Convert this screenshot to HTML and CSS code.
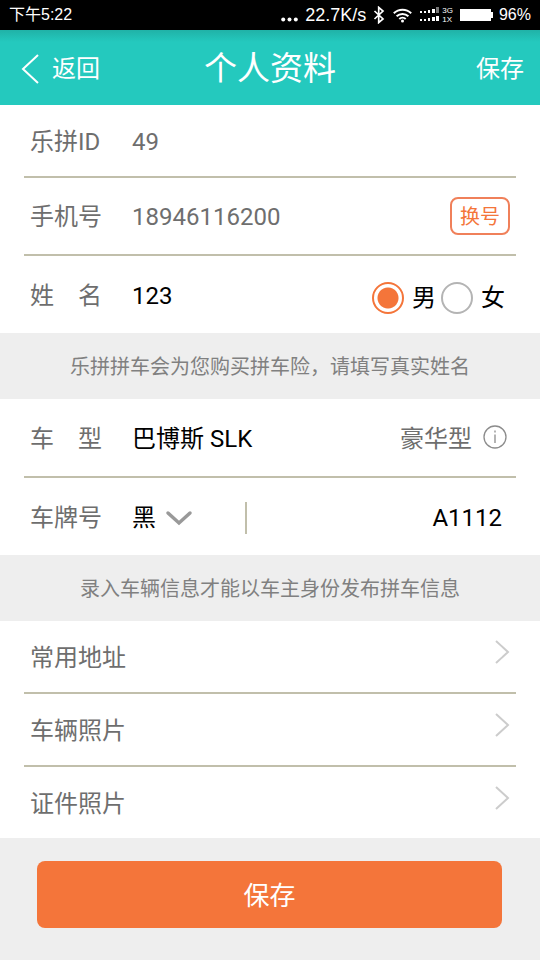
FILE: index.html
```html
<!DOCTYPE html>
<html lang="zh-CN">
<head>
<meta charset="utf-8">
<meta name="viewport" content="width=device-width, initial-scale=1">
<title>个人资料</title>
<link rel="stylesheet" href="styles.css">
</head>
<body>
<div class="status">
  <span class="status-time">下午5:22</span>
  <svg class="status-more" width="17" height="16" viewBox="0 0 17 16" aria-hidden="true"><circle cx="2.2" cy="12.500" r="2"/><circle cx="8.500" cy="12.500" r="2"/><circle cx="14.800" cy="12.500" r="2"/></svg>
  <span class="status-speed">22.7K/s</span>
  <svg class="status-bt" width="12" height="18" viewBox="0 0 12 18" fill="none" stroke="#fff" stroke-width="1.700" aria-hidden="true"><path d="M1.500 5l8.500 8-4.300 3.600V1.400L10 5l-8.500 8"/></svg>
  <svg class="status-wifi" width="19" height="15" viewBox="0 0 19 15" fill="none" stroke="#fff" stroke-width="2" aria-hidden="true"><path d="M.8 5.300a12.500 12.500 0 0 1 17.400 0M3.600 8.300a8.500 8.500 0 0 1 11.800 0M6.300 11a4.700 4.700 0 0 1 6.400 0"/><circle cx="9.500" cy="13" r="1.500" fill="#fff" stroke="none"/></svg>
  <svg class="status-signal" width="20" height="16" viewBox="0 0 20 16" fill="#fff" aria-hidden="true"><path d="M0 4h2v2H0zM4 4h2v2H4zM8 3h2v3H8zM12 2h3v4h-3zM0 12h2v2H0zM4 12h2v2H4zM8 11h2v3H8zM12 10h3v4h-3zM16 9h3v5h-3z"/><path fill="#777" d="M16 0h3v6h-3z"/></svg>
  <span class="status-net"><span>3G</span><span>1X</span></span>
  <svg class="status-battery" width="34" height="14" viewBox="0 0 34 14" fill="#fff" aria-hidden="true"><path d="M0 1h31v12H0zM31 4h2v6h-2z"/></svg>
  <span class="status-level">96%</span>
</div>

<header class="header">
  <a class="header-back" href="#back">
    <svg width="18" height="30" viewBox="0 0 18 30" fill="none" stroke="#fff" stroke-width="2" aria-hidden="true"><path d="M17 1L2 15l15 14"/></svg>
    返回
  </a>
  <h1 class="header-title">个人资料</h1>
  <button class="header-save" type="submit" form="profile">保存</button>
</header>

<form class="form" id="profile">
  <section class="group">
    <div class="row row-short">
      <span class="label">乐拼ID</span>
      <span class="value">49</span>
    </div>
    <div class="row">
      <span class="label">手机号</span>
      <span class="value">18946116200</span>
      <button class="change" type="button">换号</button>
    </div>
    <div class="row">
      <label class="label" for="name">姓　名</label>
      <input class="field" id="name" type="text" value="123">
      <div class="gender">
        <input class="radio" type="radio" name="gender" id="male" checked>
        <label class="gender-label" for="male">男</label>
        <input class="radio" type="radio" name="gender" id="female">
        <label class="gender-label" for="female">女</label>
      </div>
    </div>
  </section>

  <p class="note">乐拼拼车会为您购买拼车险，请填写真实姓名</p>

  <section class="group">
    <div class="row row-tall">
      <label class="label" for="model">车　型</label>
      <input class="field" id="model" type="text" value="巴博斯 SLK">
      <span class="grade">豪华型</span>
      <button class="info" type="button" aria-label="车型说明">
        <svg width="24" height="24" viewBox="0 0 24 24" fill="none" stroke="#8c8c8c" stroke-width="1.300" aria-hidden="true"><circle cx="12" cy="12" r="11"/><path d="M12 9.500V18M12 5.500v2"/></svg>
      </button>
    </div>
    <div class="row">
      <label class="label" for="province">车牌号</label>
      <div class="province">
        <select class="select" id="province"><option>黑</option><option>吉</option><option>辽</option></select>
        <svg width="28" height="18" viewBox="0 0 28 18" fill="none" stroke="#999" stroke-width="3.500" stroke-linecap="round" aria-hidden="true"><path d="M3 4l11 10L25 4"/></svg>
      </div>
      <input class="field plate" type="text" value="A1112" aria-label="车牌号码">
    </div>
  </section>

  <p class="note">录入车辆信息才能以车主身份发布拼车信息</p>

  <nav class="group">
    <a class="row row-short" href="#address"><span>常用地址</span><svg class="chevron" width="16" height="26" viewBox="0 0 16 26" aria-hidden="true"><path d="M2 2l12 11L2 24"/></svg></a>
    <a class="row row-short" href="#car-photo"><span>车辆照片</span><svg class="chevron" width="16" height="26" viewBox="0 0 16 26" aria-hidden="true"><path d="M2 2l12 11L2 24"/></svg></a>
    <a class="row row-short" href="#id-photo"><span>证件照片</span><svg class="chevron" width="16" height="26" viewBox="0 0 16 26" aria-hidden="true"><path d="M2 2l12 11L2 24"/></svg></a>
  </nav>

  <div class="footer">
    <button class="submit" type="submit">保存</button>
  </div>
</form>
</body>
</html>
```

FILE: styles.css
```css
* {
  box-sizing: border-box;
}

body {
  margin: 0;
  background: #eee;
  color: #6e6e6e;
  font: 24px/32px Roboto, "Noto Sans CJK SC", sans-serif;
}

button,
input,
select {
  margin: 0;
  padding: 0;
  border: 0;
  background: none;
  color: inherit;
  font: inherit;
}

a {
  color: inherit;
  text-decoration: none;
}

svg {
  display: block;
  flex: none;
}

/* Status bar */

.status {
  display: flex;
  align-items: center;
  height: 30px;
  padding: 0 9px;
  background: #000;
  color: #fff;
  font: 16px/30px "Liberation Sans", "Noto Sans CJK SC", sans-serif;
}

.status-time {
  margin-right: auto;
}

.status-more {
  margin-right: 7px;
  fill: #fff;
}

.status-speed {
  margin-right: 7px;
  font-size: 18px;
}

.status-bt {
  margin-right: 8px;
}

.status-wifi {
  margin-right: 8px;
}

.status-signal {
  margin-right: 2px;
}

.status-net {
  display: grid;
  margin-right: 7px;
  font-size: 8px;
  line-height: 9px;
}

.status-battery {
  margin-right: 5px;
}

/* Title bar */

.header {
  display: grid;
  grid-template-columns: 1fr auto 1fr;
  align-items: center;
  height: 75px;
  padding: 2px 16px 0;
  background: linear-gradient(#20b2a7, #24c9be 12px);
  color: #fff;
}

.header-back {
  display: flex;
  align-items: center;
  gap: 13px;
  padding-left: 5px;
}

.header-title {
  margin: 0;
  font-size: 33px;
  font-weight: 400;
  line-height: 40px;
}

.header-save {
  justify-self: end;
}

/* Form rows */

.group {
  padding: 0 24px;
  background: #fff;
}

.row {
  display: flex;
  align-items: center;
  min-height: 78px;
  padding: 2px 6px 0;
  border-bottom: 2px solid #c1bfab;
}

.row-short {
  min-height: 73px;
}

.row-tall {
  min-height: 79px;
}

.row:last-child {
  min-height: 77px;
  border-bottom: 0;
}

.row-short:last-child {
  min-height: 71px;
}

.label {
  flex: none;
  width: 102px;
}

.value {
  flex: 1;
}

.field {
  flex: 1;
  min-width: 0;
  color: #000;
}

.change {
  width: 60px;
  height: 38px;
  margin-bottom: 2px;
  padding-top: 2px;
  border: 2px solid #f0805a;
  border-radius: 8px;
  color: #f4753a;
  font-size: 20px;
  line-height: 24px;
}

.gender {
  display: flex;
  align-items: center;
  padding: 5px 5px 0 0;
  color: #000;
}

.gender-label {
  margin-left: 8px;
}

.radio {
  width: 32px;
  height: 32px;
  border: 2px solid #b4b4b4;
  border-radius: 50%;
  appearance: none;
}

.radio:checked {
  border-color: #f4753a;
  background: radial-gradient(circle, #f4753a 10px, #fff 11px);
}

.gender-label + .radio {
  margin-left: 5px;
}

.grade {
  margin-right: 11px;
}

.info {
  margin: 0 3px 4px 0;
}

.province {
  display: flex;
  align-items: center;
  gap: 9px;
  width: 115px;
  border-right: 2px solid #c1bfab;
}

.select {
  color: #000;
  appearance: none;
}

.plate {
  padding-right: 8px;
  text-align: right;
}

.chevron {
  margin: 0 0 12px auto;
  fill: none;
  stroke: #ccc;
  stroke-width: 2;
}

.note {
  margin: 0;
  padding: 18px 0 16px;
  color: #808080;
  font-size: 20px;
  text-align: center;
}

/* Submit */

.footer {
  padding: 23px 38px 32px 37px;
}

.submit {
  width: 100%;
  height: 67px;
  padding-top: 2px;
  border-radius: 8px;
  background: #f4753a;
  color: #fff;
  font-size: 26px;
}
```
